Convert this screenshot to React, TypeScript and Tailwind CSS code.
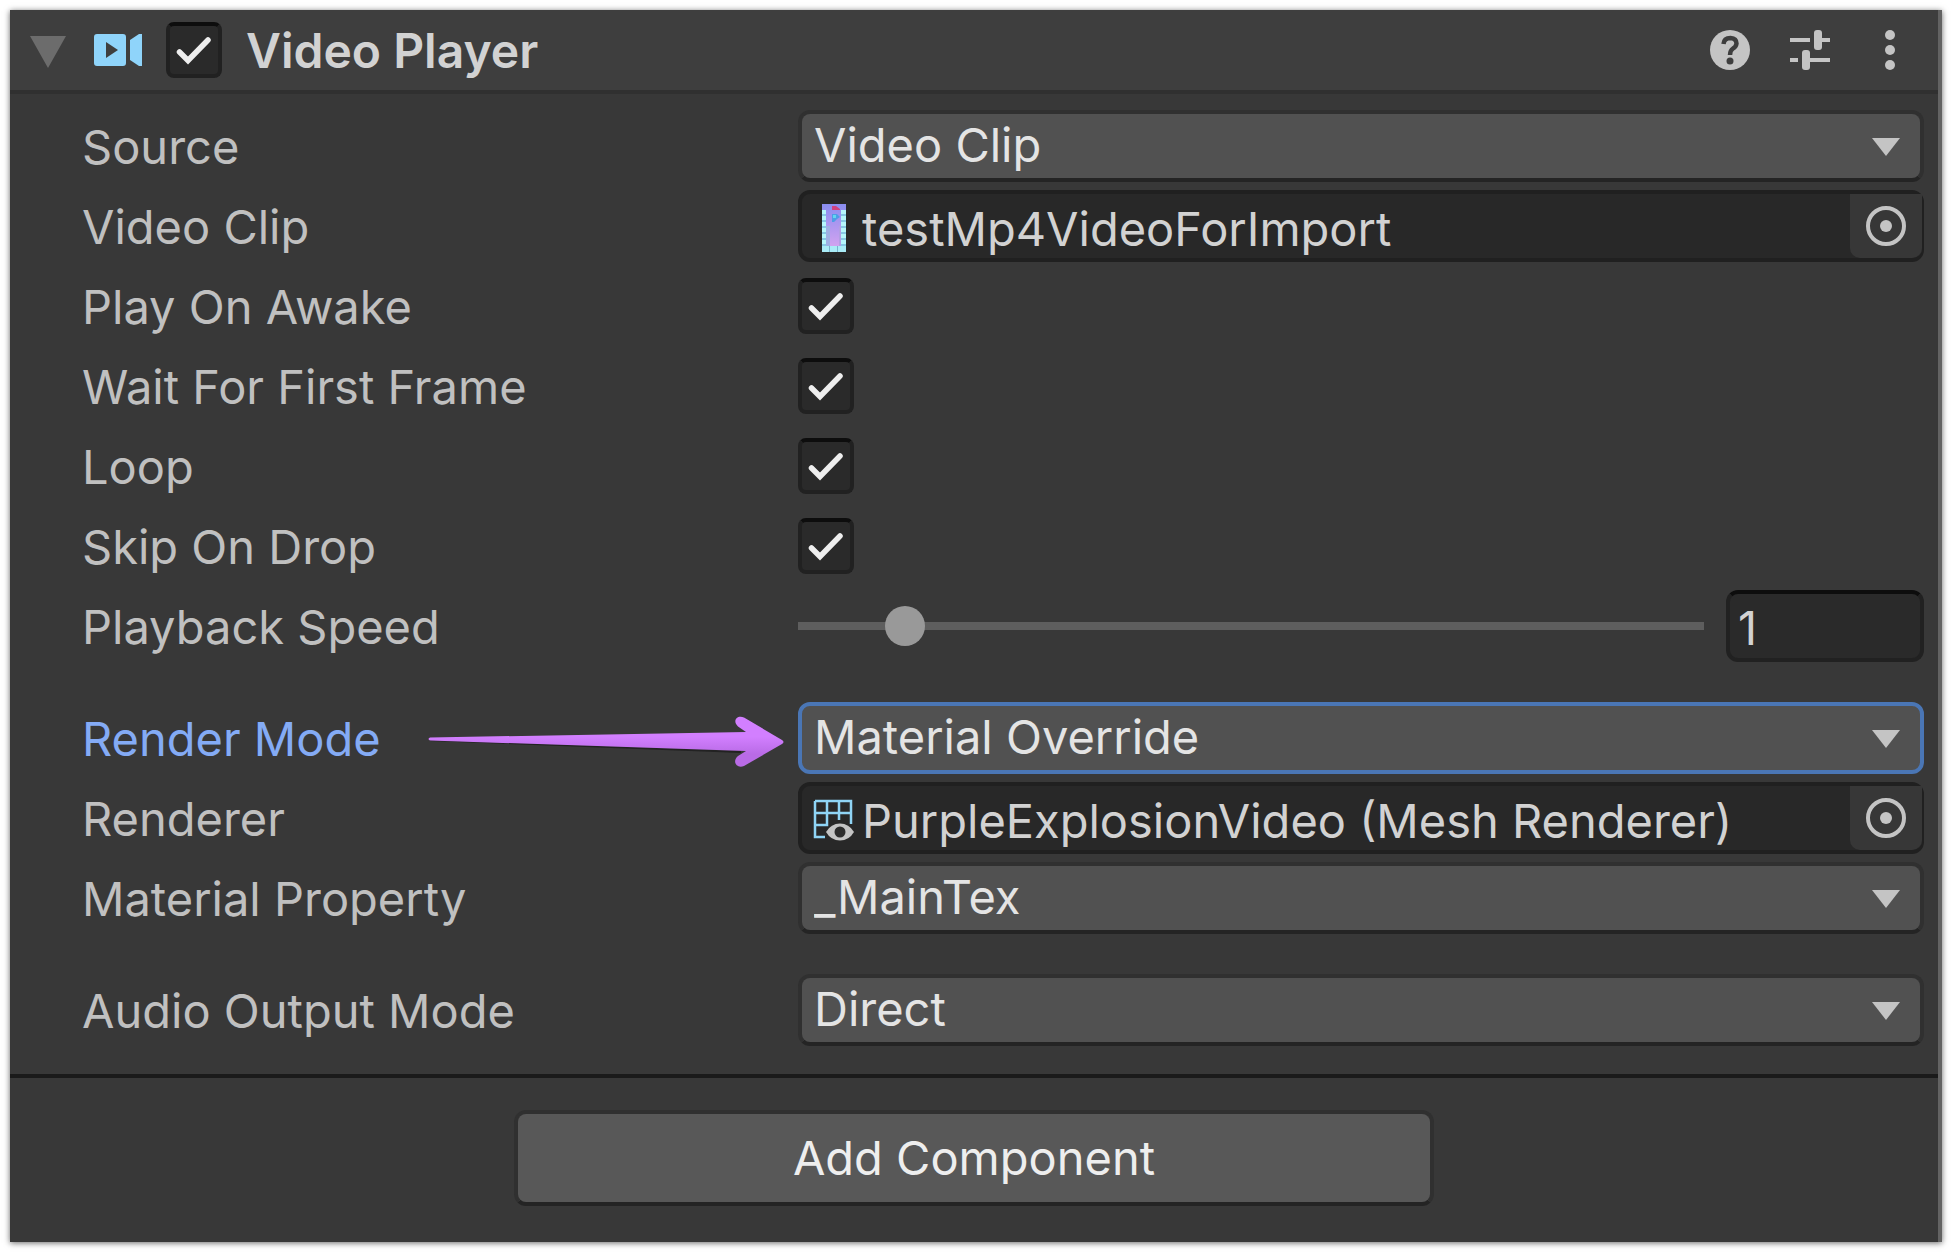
import { useId, useState } from "react";
import type { ReactNode } from "react";

function Tick() {
  return (
    <svg viewBox="0 0 56 56" className="pointer-events-none absolute inset-0 h-14 w-14" aria-hidden="true">
      <path d="M13.500 30 L22 38.500 L42 18" fill="none" stroke="#eeeeee" strokeWidth="5.500" strokeLinecap="round" strokeLinejoin="miter" />
    </svg>
  );
}

function CheckBox({ id, label }: { id?: string; label?: string }) {
  const [on, setOn] = useState(true);
  return (
    <span className="relative block h-14 w-14 shrink-0">
      <input
        id={id}
        type="checkbox"
        aria-label={label}
        checked={on}
        onChange={(e) => setOn(e.target.checked)}
        className="block h-14 w-14 appearance-none rounded-lg border-4 border-[#212121] border-t-[#0d0d0d] bg-[#2a2a2a] outline-none"
      />
      {on && <Tick />}
    </span>
  );
}

function Row({ label, id, active, children }: { label: string; id: string; active?: boolean; children: ReactNode }) {
  return (
    <div className="grid h-18 grid-cols-[716px_minmax(0,1fr)] items-center">
      <div className="flex items-center pt-[2px]">
        <label htmlFor={id} className={active ? "whitespace-nowrap text-[#84abf5]" : "whitespace-nowrap text-[#c0c0c0]"}>
          {label}
        </label>
        {active && <Arrow />}
      </div>
      {children}
    </div>
  );
}

function Arrow() {
  return (
    <svg viewBox="0 0 360 60" className="ml-auto mr-[14px] h-15 w-[360px] shrink-0" aria-hidden="true">
      <defs>
        <linearGradient id="arrowFill" x1="0" y1="0" x2="0" y2="1">
          <stop offset="0.4" stopColor="#d27fff" />
          <stop offset="0.75" stopColor="#b96be6" />
        </linearGradient>
      </defs>
      <path d="M6 31 L317 42 L317 44 L6 32 Z" fill="#222222" />
      <path
        d="M6 28.500 L322 23 L314 17.500 C308 12 313 5.500 320 8.500 L358 31 Q361 33 358 35 L320 57 C312 60 308 52 314 47 L322 42 L6 31.500 Q3 30 6 28.500 Z"
        fill="url(#arrowFill)"
      />
    </svg>
  );
}

function DropDown({ id, value, options, active }: { id: string; value: string; options: string[]; active?: boolean }) {
  return (
    <span className="relative block h-18">
      <select
        id={id}
        defaultValue={value}
        className={
          active
            ? "block h-18 w-full appearance-none rounded-xl border-4 border-[#4a76b5] bg-[#515151] pb-[2px] pl-3 text-[#e4e4e4] outline-none"
            : "block h-18 w-full appearance-none rounded-xl border-4 border-[#303030] border-b-[#242424] bg-[#515151] pb-[2px] pl-3 text-[#e4e4e4] outline-none"
        }
      >
        {options.map((o) => (
          <option key={o}>{o}</option>
        ))}
      </select>
      <svg viewBox="0 0 28 18" className="pointer-events-none absolute right-6 top-7 h-[18px] w-7" aria-hidden="true">
        <path d="M0 0 H28 L14 18 Z" fill="#c4c4c4" />
      </svg>
    </span>
  );
}

function ObjectField({ id, value, icon }: { id: string; value: string; icon: ReactNode }) {
  return (
    <span className="flex h-18 items-stretch rounded-xl border-4 border-r-2 border-[#202020] bg-[#282828]">
      <span className="flex w-[60px] shrink-0 items-center justify-center pl-1 pt-1">{icon}</span>
      <input id={id} readOnly defaultValue={value} className="min-w-0 flex-1 bg-transparent pt-[6px] text-[#d2d2d2] outline-none" />
      <button type="button" aria-label={"Select " + value} className="flex w-18 shrink-0 items-center justify-center rounded-b-[10px] bg-[#373737]">
        <svg viewBox="0 0 40 40" className="h-10 w-10" aria-hidden="true">
          <circle cx="20" cy="20" r="18" fill="none" stroke="#c4c4c4" strokeWidth="4" />
          <circle cx="20" cy="20" r="6" fill="#c4c4c4" />
        </svg>
      </button>
    </span>
  );
}

function ClipThumb() {
  const cells = [6, 12, 18, 24, 30, 36];
  return (
    <svg viewBox="0 0 24 48" className="h-12 w-6" aria-hidden="true">
      <defs>
        <linearGradient id="clipFill" x1="0" y1="0" x2="0" y2="1">
          <stop offset="0" stopColor="#8a8df0" />
          <stop offset="1" stopColor="#dba6f0" />
        </linearGradient>
      </defs>
      <rect width="24" height="48" fill="url(#clipFill)" />
      <rect x="0" y="9" width="4" height="39" fill="#86c8e4" />
      <rect x="19" y="6" width="5" height="42" fill="#86c8e4" />
      {cells.map((y) => (
        <g key={y}>
          <rect x="0" y={y} width="4" height="4" fill="#b5f7fb" />
          <rect x="19" y={y} width="5" height="4" fill="#b5f7fb" />
        </g>
      ))}
      <rect x="4" y="22" width="4" height="20" fill="#9fb0e4" />
      <rect x="17" y="22" width="2" height="20" fill="#b39fe4" />
      <rect x="0" y="42" width="24" height="6" fill="#a9ecf7" />
      <rect x="7" y="42" width="1" height="6" fill="#79b4cc" />
      <rect x="15" y="42" width="1" height="6" fill="#79b4cc" />
      <path d="M10 2 h4 l4 3 v1 h-8 z" fill="#d0417f" />
      <path d="M10 10 h5 l3 3 l-3 2 l-3 3 h-2 z" fill="#4e9de6" />
      <rect x="11" y="11" width="3" height="3" fill="#62d6f0" />
    </svg>
  );
}

function MeshIcon() {
  return (
    <svg viewBox="0 0 42 42" className="h-[42px] w-[42px]" aria-hidden="true">
      <path d="M2 2 H38 V25 M2 2 V38 H12 M2 14 H38 M2 26 H14 V2 M26 2 V21" fill="none" stroke="#8fd4f5" strokeWidth="2.500" />
      <path d="M13 33 Q18 24.500 27 24.500 Q36 24.500 41 33 Q36 41.500 27 41.500 Q18 41.500 13 33 Z" fill="#c4c4c4" />
      <circle cx="27" cy="33" r="5.500" fill="#2c2c2c" />
    </svg>
  );
}

function Header() {
  return (
    <header className="flex h-21 items-center border-b-4 border-[#303030] bg-[#3e3e3e] pl-5 pr-7">
      <button type="button" aria-label="Collapse" className="shrink-0 pt-1">
        <svg viewBox="0 0 36 32" className="h-8 w-9" aria-hidden="true">
          <path d="M0 0 H36 L18 32 Z" fill="#6c6c6c" />
        </svg>
      </button>
      <svg viewBox="0 0 48 32" className="ml-7 h-8 w-12 shrink-0" aria-hidden="true">
        <path fillRule="evenodd" d="M3 0 H29 Q32 0 32 3 V29 Q32 32 29 32 H3 Q0 32 0 29 V3 Q0 0 3 0 Z M12 8 V24 L24 16 Z" fill="#8fd4fa" />
        <path d="M36 6 L45 0 H48 V32 H45 L36 26 Z" fill="#8fd4fa" />
      </svg>
      <span className="ml-6">
        <CheckBox label="Enable Video Player" />
      </span>
      <h1 className="ml-6 flex-1 pt-[2px] text-5xl font-semibold leading-[60px] text-[#d2d2d2]">Video Player</h1>
      <button type="button" aria-label="Help" className="shrink-0">
        <svg viewBox="0 0 40 40" className="h-10 w-10" aria-hidden="true">
          <circle cx="20" cy="20" r="20" fill="#c4c4c4" />
          <path d="M13.500 14 Q14 8 20.500 8 Q26.500 8.500 26.500 13.500 Q26 17 23 18.500 Q20 20.500 20 25" fill="none" stroke="#3e3e3e" strokeWidth="4.500" />
          <circle cx="20" cy="31" r="3.500" fill="#3e3e3e" />
        </svg>
      </button>
      <button type="button" aria-label="Presets" className="ml-10 shrink-0">
        <svg viewBox="0 0 40 40" className="h-10 w-10" fill="#c4c4c4" aria-hidden="true">
          <rect x="0" y="8" width="20" height="4" />
          <rect x="30" y="8" width="10" height="4" />
          <rect x="24" y="0" width="8" height="20" rx="3" />
          <rect x="0" y="28" width="8" height="4" />
          <rect x="18" y="28" width="22" height="4" />
          <rect x="12" y="20" width="8" height="20" rx="3" />
        </svg>
      </button>
      <button type="button" aria-label="More" className="ml-10 shrink-0">
        <svg viewBox="0 0 40 40" className="h-10 w-10" fill="#c4c4c4" aria-hidden="true">
          <circle cx="20" cy="5" r="5" />
          <circle cx="20" cy="20" r="5" />
          <circle cx="20" cy="35" r="5" />
        </svg>
      </button>
    </header>
  );
}

function SpeedField({ id }: { id: string }) {
  const [speed, setSpeed] = useState("1");
  return (
    <span className="flex items-center gap-[22px]">
      <input
        id={id}
        type="range"
        min="0"
        max="10"
        step="0.1"
        value={speed}
        onChange={(e) => setSpeed(e.target.value)}
        className="h-10 min-w-0 flex-1 appearance-none bg-transparent outline-none [&::-webkit-slider-runnable-track]:h-2 [&::-webkit-slider-runnable-track]:bg-[#5e5e5e] [&::-webkit-slider-thumb]:-mt-4 [&::-webkit-slider-thumb]:h-10 [&::-webkit-slider-thumb]:w-10 [&::-webkit-slider-thumb]:appearance-none [&::-webkit-slider-thumb]:rounded-full [&::-webkit-slider-thumb]:bg-[#999999]"
      />
      <input
        type="text"
        aria-label="Playback Speed value"
        value={speed}
        onChange={(e) => setSpeed(e.target.value)}
        className="h-18 w-[198px] shrink-0 rounded-xl border-4 border-[#212121] border-t-[#0d0d0d] bg-[#2a2a2a] pl-2 pt-[2px] text-[#d2d2d2] outline-none"
      />
    </span>
  );
}

export default function App() {
  const uid = useId();
  return (
    <div className="min-h-screen bg-white p-[10px] font-['Inter',sans-serif] text-[47px] leading-[60px] [font-optical-sizing:none]">
      <main className="flex min-h-[calc(100vh-20px)] flex-col border-r-4 border-[#636363] bg-[#383838] shadow-[0_1px_6px_rgba(0,0,0,0.6)]">
        <Header />
        <section className="flex flex-col gap-8 border-b-4 border-[#1a1a1a] pb-7 pl-18 pr-[14px] pt-4">
          <div className="flex flex-col gap-2">
            <Row label="Source" id={uid + "source"}>
              <DropDown id={uid + "source"} value="Video Clip" options={["Video Clip", "URL"]} />
            </Row>
            <Row label="Video Clip" id={uid + "clip"}>
              <ObjectField id={uid + "clip"} value="testMp4VideoForImport" icon={<ClipThumb />} />
            </Row>
            <Row label="Play On Awake" id={uid + "awake"}>
              <CheckBox id={uid + "awake"} />
            </Row>
            <Row label="Wait For First Frame" id={uid + "wait"}>
              <CheckBox id={uid + "wait"} />
            </Row>
            <Row label="Loop" id={uid + "loop"}>
              <CheckBox id={uid + "loop"} />
            </Row>
            <Row label="Skip On Drop" id={uid + "skip"}>
              <CheckBox id={uid + "skip"} />
            </Row>
            <Row label="Playback Speed" id={uid + "speed"}>
              <SpeedField id={uid + "speed"} />
            </Row>
          </div>
          <div className="mt-2 flex flex-col gap-2">
            <Row label="Render Mode" id={uid + "mode"} active>
              <DropDown
                id={uid + "mode"}
                value="Material Override"
                options={["Camera Far Plane", "Camera Near Plane", "Render Texture", "Material Override", "API Only"]}
                active
              />
            </Row>
            <Row label="Renderer" id={uid + "renderer"}>
              <ObjectField id={uid + "renderer"} value="PurpleExplosionVideo (Mesh Renderer)" icon={<MeshIcon />} />
            </Row>
            <Row label="Material Property" id={uid + "prop"}>
              <DropDown id={uid + "prop"} value="_MainTex" options={["_MainTex"]} />
            </Row>
          </div>
          <div className="mt-2">
            <Row label="Audio Output Mode" id={uid + "audio"}>
              <DropDown id={uid + "audio"} value="Direct" options={["None", "Audio Source", "Direct", "API Only"]} />
            </Row>
          </div>
        </section>
        <footer className="flex justify-center pt-8">
          <button type="button" className="h-24 w-[920px] rounded-xl border-4 border-[#303030] border-b-[#242424] bg-[#585858] text-[#eeeeee]">
            Add Component
          </button>
        </footer>
      </main>
    </div>
  );
}
